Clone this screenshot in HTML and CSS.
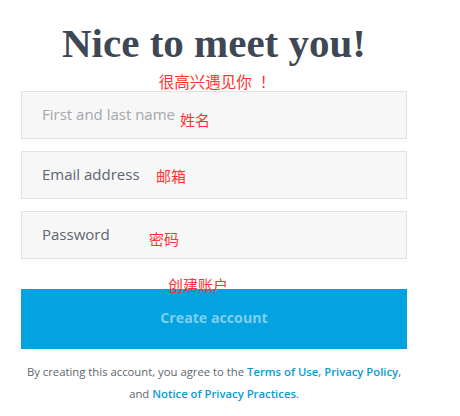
FILE: index.html
```html
<!DOCTYPE html>
<html lang="zh-CN">
<head>
  <meta charset="UTF-8" />
  <meta name="viewport" content="width=device-width, initial-scale=1.0"/>
  <title>Nice to meet you</title>
  <link rel="stylesheet" href="styles.css">
</head>
<body>
  <div id="signup">
    <h1 class="title">Nice to meet you!</h1>
    <div class="note title-note">很高兴遇见你<span class="bang">！</span></div>

    <div class="field">
      <span class="label placeholder">First and last name</span>
      <span class="note note-name">姓名</span>
    </div>
    <div class="field">
      <span class="label">Email address</span>
      <span class="note note-email">邮箱</span>
    </div>
    <div class="field">
      <span class="label">Password</span>
      <span class="note note-pass">密码</span>
    </div>

    <div class="submit-wrap">
      <span class="note note-submit">创建账户</span>
      <button class="submit">Create account</button>
    </div>

    <p class="legal">
      By creating this account, you agree to the <a href="#">Terms of Use</a>, <a href="#">Privacy Policy</a>,<br>
      and <a href="#">Notice of Privacy Practices</a>.
    </p>
  </div>
</body>
</html>
```

FILE: styles.css
```css
* {
  box-sizing: border-box;
  margin: 0;
  padding: 0;
}

body {
  font-family: "Open Sans", "Liberation Sans", sans-serif;
  background: #fff;
  color: #5c6670;
}

#signup {
  width: 386px;
  margin-left: 21px;
  padding-top: 20px;
  position: relative;
}

.title {
  font-family: "Liberation Serif", serif;
  font-weight: bold;
  font-size: 41px;
  line-height: 46px;
  color: #3e4854;
  text-align: center;
}

.note {
  font-family: "Noto Sans CJK SC", sans-serif;
  font-size: 15px;
  line-height: 18px;
  color: #ff3333;
}

.title-note {
  text-align: center;
  font-size: 15.5px;
  height: 25px;
  padding-top: 6px;
  padding-left: 6px;
}

.title-note .bang {
  padding-left: 8px;
}

.field {
  position: relative;
  height: 48px;
  margin-bottom: 12px;
  background: #f7f7f7;
  border: 1px solid #e2e2e2;
  padding-left: 20px;
  display: flex;
  align-items: center;
}

.label {
  font-size: 15px;
  color: #5c6670;
  margin-top: -2px;
}

.label.placeholder {
  color: #a3a7ad;
}

.field .note {
  position: absolute;
}

.note-name { left: 158px; top: 19px; }
.note-email { left: 134px; top: 15px; }
.note-pass { left: 127px; top: 18px; }

.submit-wrap {
  position: relative;
  padding-top: 18px;
}

.note-submit {
  position: absolute;
  left: 147px;
  top: 5px;
}

.submit {
  display: block;
  width: 100%;
  height: 60px;
  padding-bottom: 3px;
  border: none;
  background: #03a2e0;
  color: #7fd0f0;
  font-family: "Open Sans", "Liberation Sans", sans-serif;
  font-weight: bold;
  font-size: 14.2px;
}

.legal {
  margin-top: 12px;
  font-size: 11.3px;
  line-height: 22px;
  text-align: center;
  color: #5c6670;
}

.legal a {
  color: #0a9ad6;
  font-weight: 600;
  text-decoration: none;
}
```
